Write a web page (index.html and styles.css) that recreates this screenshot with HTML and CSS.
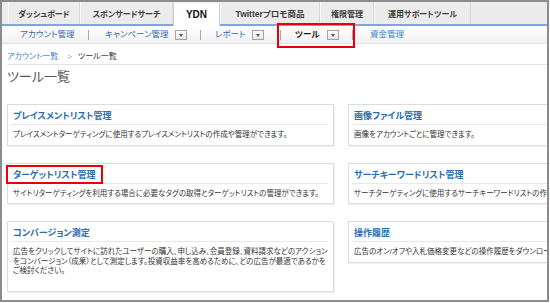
FILE: index.html
```html
<!DOCTYPE html>
<html lang="ja">
<head>
  <meta charset="UTF-8" />
  <title>ツール一覧</title>
  <link rel="stylesheet" href="styles.css">
</head>
<body>
  <div class="frame">
    <nav class="tabs">
      <a class="tab tab-dash">ダッシュボード</a>
      <a class="tab tab-ss">スポンサードサーチ</a>
      <a class="tab tab-ydn active">YDN</a>
      <a class="tab tab-tw">Twitterプロモ商品</a>
      <a class="tab tab-auth">権限管理</a>
      <a class="tab tab-ops">運用サポートツール</a>
    </nav>

    <nav class="subnav">
      <div class="sub sub-account"><a>アカウント管理</a></div>
      <div class="sub sub-campaign"><a>キャンペーン管理</a><span class="drop"></span></div>
      <div class="sub sub-report"><a>レポート</a><span class="drop"></span></div>
      <div class="sub sub-tool current callout"><a>ツール</a><span class="drop"></span></div>
      <div class="sub sub-money"><a class="light">資金管理</a></div>
    </nav>

    <main class="content">
      <div class="breadcrumb">
        <a>アカウント一覧</a><span class="arrow">&gt;</span><span>ツール一覧</span>
      </div>
      <h1 class="page-title">ツール一覧</h1>

      <div class="grid">
        <div class="card">
          <h2 class="card-title"><a>プレイスメントリスト管理</a></h2>
          <p class="card-desc">プレイスメントターゲティングに使用するプレイスメントリストの作成や管理ができます。</p>
        </div>
        <div class="card">
          <h2 class="card-title"><a>画像ファイル管理</a></h2>
          <p class="card-desc">画像をアカウントごとに管理できます。</p>
        </div>
        <div class="card">
          <h2 class="card-title"><a class="callout">ターゲットリスト管理</a></h2>
          <p class="card-desc">サイトリターゲティングを利用する場合に必要なタグの取得とターゲットリストの管理ができます。</p>
        </div>
        <div class="card">
          <h2 class="card-title"><a>サーチキーワードリスト管理</a></h2>
          <p class="card-desc">サーチターゲティングに使用するサーチキーワードリストの作成や管理ができます。</p>
        </div>
        <div class="card">
          <h2 class="card-title"><a>コンバージョン測定</a></h2>
          <p class="card-desc card-desc-long">広告をクリックしてサイトに訪れたユーザーの購入、申し込み、会員登録、資料請求などのアクション<br>をコンバージョン（成果）として測定します。投資収益率を高めるために、どの広告が最適であるかを<br>ご検討ください。</p>
        </div>
        <div class="card">
          <h2 class="card-title"><a>操作履歴</a></h2>
          <p class="card-desc">広告のオン/オフや入札価格変更などの操作履歴をダウンロードできます。</p>
        </div>
      </div>
    </main>
  </div>
</body>
</html>
```

FILE: styles.css
```css
body {
  margin: 0;
  padding: 0;
  background: #fff;
  font-family: "Liberation Sans", "Noto Sans CJK JP", sans-serif;
  font-feature-settings: "palt";
  color: #333;
}

a {
  text-decoration: none;
  cursor: pointer;
}

.frame {
  width: 549px;
  height: 302px;
  box-sizing: border-box;
  border: 2px solid #8c8c8c;
  overflow: hidden;
  position: relative;
  background: #fff;
}

/* main tabs */
.tabs {
  display: flex;
  height: 22px;
  padding-left: 6px;
  background: #ececec;
  border-bottom: 2px solid #7ea6da;
}

.tab {
  box-sizing: border-box;
  height: 22px;
  padding-top: 6px;
  line-height: 13px;
  font-size: 8px;
  font-weight: bold;
  color: #3c3c3c;
  text-align: center;
  border-right: 1px solid #d8d8d8;
  border-left: 1px solid #f8f8f8;
  white-space: nowrap;
}

.tab-dash { width: 72px; }
.tab-ss { width: 93px; }
.tab-ydn { width: 47px; }
.tab-tw { width: 100px; }
.tab-auth { width: 54px; }
.tab-ops { width: 97px; }

.tab-tw { font-size: 8.5px; }

.tab.active {
  height: 23px;
  margin-top: 1px;
  margin-bottom: -2px;
  padding-top: 5px;
  background: #fff;
  color: #111;
  font-size: 10px;
  border-left: 1px solid #d0d0d0;
  border-right: 1px solid #d0d0d0;
}

/* sub navigation */
.subnav {
  display: flex;
  height: 17px;
  background: linear-gradient(#ffffff, #f1f1f1);
  border-bottom: 1px solid #e2e2e2;
  font-size: 8.5px;
  line-height: 17px;
}

.sub {
  position: relative;
  display: flex;
  align-items: center;
  box-sizing: border-box;
  white-space: nowrap;
}

.sub + .sub::before {
  content: "";
  position: absolute;
  left: 0;
  top: 4px;
  height: 10px;
  border-left: 1px solid #a8a8a8;
}

.sub a { color: #3a6a9f; }
.sub a.light { color: #3a88c8; }

.sub-account { width: 86px; padding-left: 18px; }
.sub-campaign { width: 112px; padding-left: 17px; }
.sub-report { width: 80px; padding-left: 15px; }
.sub-tool { width: 72px; padding-left: 15px; }
.sub-money { padding-left: 18px; }

.sub.current a {
  color: #1c1c1c;
  font-weight: bold;
}

.drop {
  position: relative;
  width: 10px;
  height: 8px;
  margin-left: 6px;
  border: 1px solid #a4a4a4;
  background: linear-gradient(#fdfdfd, #e6e6e6);
}

.drop::after {
  content: "";
  position: absolute;
  left: 3px;
  top: 3px;
  border-left: 2px solid transparent;
  border-right: 2px solid transparent;
  border-top: 3px solid #555;
}

.sub-tool .drop { margin-left: 7px; }

/* red annotation boxes */
.callout {
  position: relative;
}

.callout::after {
  content: "";
  position: absolute;
  border: 2px solid #e8000b;
  pointer-events: none;
}

.sub.callout::after {
  left: -3px;
  right: -3px;
  top: -3px;
  bottom: -5px;
}

.card-title .callout::after {
  left: -7px;
  right: -8px;
  top: -5px;
  bottom: -4px;
}

/* page content */
.content {
  padding-left: 5px;
}

.breadcrumb {
  padding-top: 6px;
  line-height: 14px;
  font-size: 8px;
  color: #333;
  border-bottom: 1px solid #e4e4e4;
}

.breadcrumb a { color: #3a88c8; }

.breadcrumb .arrow {
  color: #999;
  margin: 0 6px 0 9px;
}

.page-title {
  margin: 4px 0 19px;
  line-height: 16px;
  font-size: 13px;
  font-weight: normal;
  color: #555;
}

.grid {
  display: grid;
  grid-template-columns: 327px 327px;
  column-gap: 14px;
  row-gap: 17px;
  align-items: start;
}

.card {
  border: 1px solid #dcdcdc;
  box-shadow: 1px 1px 0 #f0f0f0;
  background: #fff;
}

.card-title {
  margin: 0 5px 0 3px;
  padding: 5px 0 1px 2px;
  line-height: 13px;
  font-size: 9px;
  font-weight: bold;
  border-bottom: 1px solid #e8e8e8;
}

.card-title a { color: #2a6db0; }

.card-desc {
  margin: 0;
  padding: 5px;
  line-height: 9.5px;
  font-size: 7.5px;
  color: #333;
  white-space: nowrap;
}

.card-desc-long {
  padding-bottom: 15px;
}
```
